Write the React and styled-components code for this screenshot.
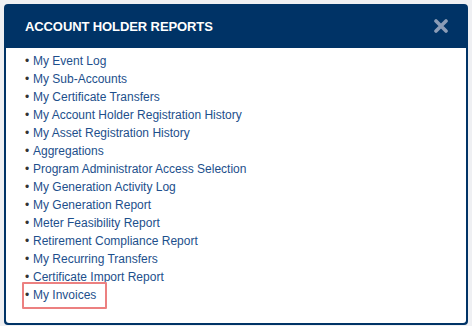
import React from 'react';
import styled, { createGlobalStyle } from 'styled-components';

const GlobalStyle = createGlobalStyle`
  html, body {
    margin: 0;
    padding: 0;
    background: #eff0f3;
    font-family: "Liberation Sans", Arial, sans-serif;
  }
`;

const reports = [
  'My Event Log',
  'My Sub-Accounts',
  'My Certificate Transfers',
  'My Account Holder Registration History',
  'My Asset Registration History',
  'Aggregations',
  'Program Administrator Access Selection',
  'My Generation Activity Log',
  'My Generation Report',
  'Meter Feasibility Report',
  'Retirement Compliance Report',
  'My Recurring Transfers',
  'Certificate Import Report',
  'My Invoices',
];

const App = () => (
  <Page>
    <GlobalStyle />
    <Modal>
      <Header>
        <Title>ACCOUNT HOLDER REPORTS</Title>
        <CloseButton aria-label="Close">
          <svg width="14" height="14" viewBox="0 0 14 14">
            <path d="M2 2 L12 12 M12 2 L2 12" stroke="#8b9cb6" strokeWidth="3.6" strokeLinecap="round" />
          </svg>
        </CloseButton>
      </Header>
      <Body>
        <List>
          {reports.map((name, i) => (
            <Item key={name} $highlighted={i === reports.length - 1}>
              <Bullet>•</Bullet>
              <Link href="#">{name}</Link>
            </Item>
          ))}
        </List>
      </Body>
    </Modal>
  </Page>
);

export default App;

const Page = styled.div`
  width: 472px;
  height: 326px;
  padding: 4px;
  box-sizing: border-box;
`;

const Modal = styled.div`
  width: 464px;
  height: 321px;
  display: flex;
  flex-direction: column;
  border-radius: 4px;
  overflow: hidden;
  background: #003366;
`;

const Header = styled.div`
  height: 44px;
  flex-shrink: 0;
  display: flex;
  align-items: center;
  justify-content: space-between;
  padding: 0 20px 0 21px;
`;

const Title = styled.h2`
  margin: 0;
  color: #ffffff;
  font-size: 13px;
  font-weight: bold;
  letter-spacing: -0.1px;
`;

const CloseButton = styled.button`
  border: none;
  background: none;
  padding: 0;
  display: flex;
  cursor: pointer;
`;

const Body = styled.div`
  flex: 1;
  margin: 0 2px 2px 2px;
  background: #ffffff;
  border-radius: 0 0 3px 3px;
  padding: 4px 0 0 19px;
`;

const List = styled.ul`
  list-style: none;
  margin: 0;
  padding: 0;
`;

const Item = styled.li`
  position: relative;
  height: 18px;
  display: flex;
  align-items: center;
  font-size: 12px;

  ${({ $highlighted }) => $highlighted && `
    &::after {
      content: '';
      position: absolute;
      left: -3px;
      top: -4px;
      width: 81px;
      height: 23px;
      border: 2px solid #ec8080;
      border-radius: 1px;
    }
  `}
`;

const Bullet = styled.span`
  color: #333333;
  width: 8px;
`;

const Link = styled.a`
  color: #1d4f8c;
  text-decoration: none;
`;
